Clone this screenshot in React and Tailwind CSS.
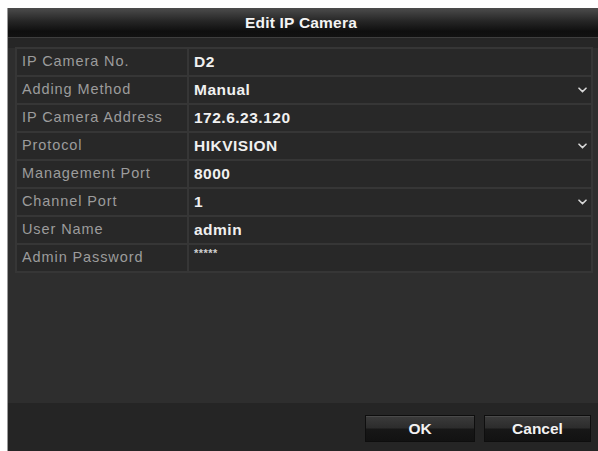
import React from 'react';

// Rows of the camera form; `select` rows show a dropdown chevron
const FIELDS = [
  { label: 'IP Camera No.', value: 'D2' },
  { label: 'Adding Method', value: 'Manual', select: true },
  { label: 'IP Camera Address', value: '172.6.23.120' },
  { label: 'Protocol', value: 'HIKVISION', select: true },
  { label: 'Management Port', value: '8000' },
  { label: 'Channel Port', value: '1', select: true },
  { label: 'User Name', value: 'admin' },
  { label: 'Admin Password', value: '*****', password: true },
];

const Chevron = () => (
  <svg width="9" height="6" viewBox="0 0 9 6" className="shrink-0">
    <path d="M1 1.2 L4.5 4.6 L8 1.2" fill="none" stroke="#d8d8d8" strokeWidth="1.6" strokeLinecap="round" />
  </svg>
);

const Button = ({ children, width }) => (
  <button
    className={`${width} h-[27px] border border-[#0e0e0e] bg-[linear-gradient(to_bottom,#3b3b3b_0%,#2c2c2c_48%,#171717_52%,#121212_100%)] text-[15.5px] font-bold text-[#f2f2f2] shadow-[inset_0_1px_0_#4a4a4a]`}
  >
    {children}
  </button>
);

export default function App() {
  return (
    <div
      className="w-[598px] h-[451px] bg-white pt-[8px] pl-[7px] overflow-hidden"
      style={{ fontFamily: '"Liberation Sans", Arial, sans-serif' }}
    >
      <div className="h-full flex flex-col bg-[#2e2e2e] border-l border-[#9a9a9a]">
        {/* title bar */}
        <div className="h-[29px] shrink-0 flex items-center justify-center bg-[linear-gradient(to_bottom,#4c4c4c_0%,#262626_45%,#0f0f0f_80%,#121212_100%)]">
          <span className="text-[15.5px] font-bold text-[#f4f4f4] tracking-[0.2px] -ml-[4px]">Edit IP Camera</span>
        </div>

        {/* form */}
        <div className="flex-1 pl-[7px] pr-[5px] pt-[9px] border-t border-[#3e3e3e] bg-[linear-gradient(to_bottom,#262626_0px,#262626_10px,#2e2e2e_10px)]">
          <div className="border-t-2 border-l-2 border-r-2 border-[#363636] bg-[#282828]">
            {FIELDS.map((f) => (
              <div key={f.label} className="h-[28px] flex border-b-2 border-[#363636]">
                <div className="w-[172px] shrink-0 border-r-2 border-[#363636] pl-[5px] flex items-center text-[14.5px] text-[#9c9c9c] tracking-[0.9px]">
                  {f.label}
                </div>
                <div className="flex-1 flex items-center pl-[5px] pr-[4px]">
                  <span
                    className={
                      f.password
                        ? 'flex-1 text-[11px] font-bold text-[#d0d0d0] tracking-[0.5px] -mt-[9px]'
                        : 'flex-1 text-[15.5px] font-bold text-[#f0f0f0] tracking-[0.5px]'
                    }
                  >
                    {f.value}
                  </span>
                  {f.select && <Chevron />}
                </div>
              </div>
            ))}
          </div>
        </div>

        {/* footer */}
        <div className="h-[48px] shrink-0 bg-[#252525] flex items-start justify-end gap-[9px] pt-[12px] pr-[7px]">
          <Button width="w-[110px]">OK</Button>
          <Button width="w-[107px]">Cancel</Button>
        </div>
      </div>
    </div>
  );
}
